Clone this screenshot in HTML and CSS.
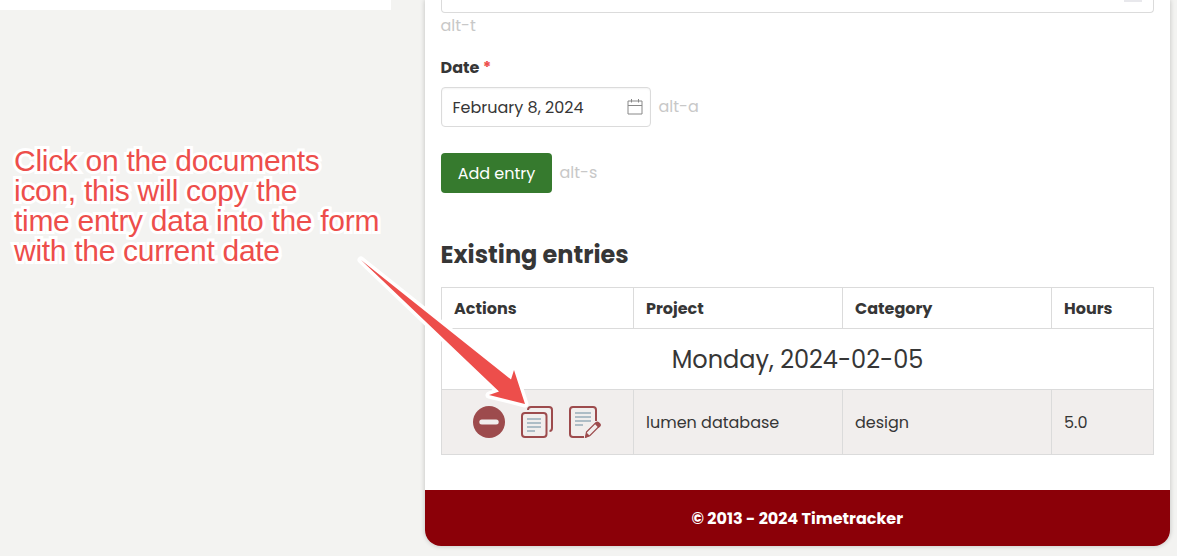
FILE: index.html
```html
<!DOCTYPE html>
<html lang="en">
<head>
<meta charset="utf-8">
<title>Timetracker</title>
<link rel="stylesheet" href="styles.css">
</head>
<body>
<div class="page">
  <aside class="side">
    <div class="side-card"></div>
    <p class="note">Click on the documents<br>icon, this will copy the<br>time entry data into the form<br>with the current date</p>
  </aside>
  <main class="card">
    <div class="content">
      <div class="textarea"><span class="resize"></span></div>
      <div class="hint hint-t">alt-t</div>
      <label class="label"><span>Date</span> <span class="required">*</span></label>
      <div class="row date-row">
        <div class="input"><span class="date-value">February 8, 2024</span>
          <svg class="calendar" width="16" height="16" viewBox="0 0 16 16" fill="none" stroke="#888"><path d="M1 2H15V15H1ZM1 6.500H15M4.500 0V3.500M11.500 0V3.500"/></svg>
        </div>
        <span class="hint">alt-a</span>
      </div>
      <div class="row submit-row">
        <button class="button">Add entry</button>
        <span class="hint">alt-s</span>
      </div>
      <h2 class="title">Existing entries</h2>
      <table class="entries">
        <colgroup><col class="c-actions"><col class="c-project"><col class="c-category"><col class="c-hours"></colgroup>
        <tr class="head"><th>Actions</th><th>Project</th><th>Category</th><th>Hours</th></tr>
        <tr class="day"><td colspan="4">Monday, 2024-02-05</td></tr>
        <tr class="entry">
          <td class="actions"><div class="icons">
            <svg width="32" height="32" viewBox="0 0 32 32"><circle cx="16" cy="16" r="16" fill="#9d4b4d"/><rect x="6.300" y="13.500" width="19.400" height="5" rx="2.500" fill="#f1eeed"/></svg>
            <svg width="32" height="32" viewBox="0 0 32 32" fill="none" stroke="#9d4b4d" stroke-width="2"><path d="M7 4C7 2 8 1 10 1H28Q31 1 31 4V22Q31 25 28.500 25"/><rect x="1" y="7" width="24.500" height="24" rx="3"/><path stroke="#aebdc6" d="M6 13H20M6 17H20M6 21H20M6 25H14"/></svg>
            <svg width="32" height="32" viewBox="0 0 32 32" fill="none" stroke="#9d4b4d" stroke-width="2"><path d="M27 15V4Q27 1 24 1H4Q1 1 1 4V28Q1 31 4 31H15"/><path stroke="#aebdc6" d="M6 7H22M6 11H22M6 15H22M6 19H14"/><path stroke-width="1.200" d="M17.500 26L26.500 17L30 20.500L21 29.500L16.500 31.300Z"/><path fill="#9d4b4d" stroke="none" d="M25.500 17.500L27.400 15.800Q28.500 15 30 16.300L31.300 17.600Q32.500 19 31.500 20.200L29.600 22ZM16 32L17.500 26.500L21 30Z"/></svg>
          </div></td>
          <td>lumen database</td><td>design</td><td>5.0</td>
        </tr>
      </table>
    </div>
    <footer class="footer">© 2013 - 2024 Timetracker</footer>
  </main>
  <svg class="arrow" width="1177" height="556" viewBox="0 0 1177 556"><path class="halo" d="M361 260L511 379.500L514 370L525 404L489 395L499 391.500Z"/><path fill="#ed4e4b" d="M361 260L511 379.500L514 370L525 404L489 395L499 391.500Z"/></svg>
</div>
</body>
</html>
```
FILE: styles.css
```css
* { box-sizing: border-box; }
body { margin: 0; background: #f3f3f1; color: #363636; font: 16px/24px Poppins, Inter, sans-serif; }
.page { position: relative; display: flex; width: 1177px; height: 556px; overflow: hidden; }
.side { width: 425px; flex: none; }
.side-card { width: 391px; height: 10px; background: #fff; }
.note { margin: 136px 0 0 14px; font: 30px/30px "Liberation Sans", Arial, sans-serif; letter-spacing: -0.29px; white-space: nowrap; color: #ed4e4b; -webkit-text-stroke: 6px #fff; paint-order: stroke fill; stroke-linejoin: round; }
.card { width: 745px; height: 546px; flex: none; display: flex; flex-direction: column; background: #fff; border-radius: 0 0 16px 16px; box-shadow: 0 0 5px rgba(0,0,0,.22); overflow: hidden; }
.content { height: 490px; padding: 0 16px; text-indent: -0.5px; }
.textarea { width: 713px; height: 13px; border: 1px solid #dbdbdb; border-top: 0; border-radius: 0 0 4px 4px; display: flex; justify-content: flex-end; padding-right: 11px; }
.resize { width: 18px; height: 2px; background: #e8e8ec; }
.hint { color: #c8c8c8; }
.hint-t { height: 24px; padding-top: 1px; }
.label { display: flex; gap: 4px; margin-top: 19px; height: 24px; font-weight: 700; }
.required { color: #ed4e4b; }
.row { display: flex; gap: 8px; }
.date-row { margin-top: 7px; height: 40px; line-height: 40px; }
.input { width: 210px; height: 40px; padding: 0 7px 0 11px; border: 1px solid #dbdbdb; border-radius: 4px; display: flex; align-items: center; justify-content: space-between; box-shadow: inset 0 1px 2px rgba(0,0,0,.05); }
.date-value { padding-top: 2px; }
.submit-row { margin-top: 26px; height: 40px; line-height: 40px; }
.button { width: 111px; height: 40px; padding: 2px 0 0; border: 0; border-radius: 4px; background: #367a2e; color: #fff; font: inherit; line-height: 38px; }
.title { margin: 47px 0 0; font-size: 24px; line-height: 30px; font-weight: 700; }
.entries { width: 713px; margin-top: 17px; border-collapse: collapse; table-layout: fixed; }
.entries th, .entries td { border: 1px solid #dbdbdb; padding: 2px 12px 0; text-align: left; white-space: nowrap; }
.entries .actions { padding-top: 0; }
.c-actions { width: 192px; }
.c-project, .c-category { width: 209px; }
.c-hours { width: 102px; }
.head { height: 41px; }
.entries .day { height: 61px; }
.entries .day td { text-align: center; font-size: 24px; }
.entry { height: 65px; background: #f1eeed; }
.icons { display: flex; gap: 16px; padding-left: 19px; }
.footer { height: 56px; padding-top: 1px; background: #8b0008; color: #fff; font-weight: 700; line-height: 56px; text-align: center; text-indent: -0.5px; }
.arrow { position: absolute; left: 0; top: 0; }
.halo { fill: #fff; stroke: #fff; stroke-width: 7px; stroke-linejoin: round; }
```
